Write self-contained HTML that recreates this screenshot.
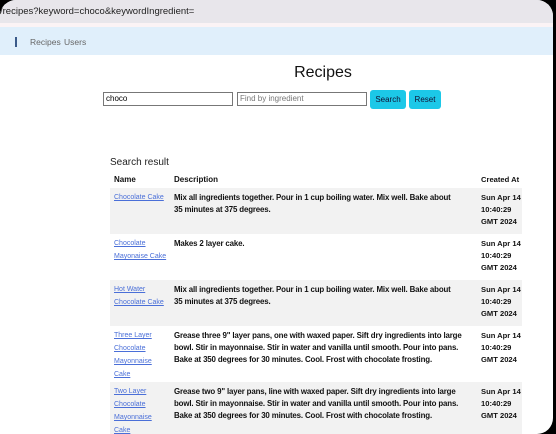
<!DOCTYPE html>
<html><head><meta charset="utf-8"><style>
*{margin:0;padding:0;box-sizing:border-box}
body{width:556px;height:434px;background:#000;font-family:"Liberation Sans",sans-serif;overflow:hidden;position:relative}
.win{position:absolute;left:0;top:0;width:553px;height:434px;background:#fff;border-radius:16px 16px 16px 0;overflow:hidden}
.addr{position:absolute;left:0;top:0;width:100%;height:23px;background:#e8e6eb;font-size:9.5px;color:#222;padding:6px 0 0 0;}
.strip{position:absolute;top:23px;left:0;width:100%;height:4px;background:#fbf3f5}
.nav{position:absolute;top:27px;left:0;width:100%;height:28px;background:#e0effb;font-size:8.5px;color:#666}
.nav .bar{position:absolute;left:15px;top:10px;width:2px;height:10px;background:#3a5a8a}
.nav span{position:absolute;top:10px}
h1{position:absolute;left:0;width:646px;text-align:center;top:64px;font-size:16px;font-weight:normal;color:#111}
.in{position:absolute;top:92px;height:14px;border:1px solid #777;font-size:8px;padding:1px 2px;background:#fff}
.btn{position:absolute;top:90px;height:19px;background:#1cc8e8;border-radius:3px;font-size:8px;color:#113;text-align:center;line-height:19px}
.sr{position:absolute;left:110px;top:157px;font-size:10px;color:#222}
table{position:absolute;left:110px;top:171px;width:412px;border-collapse:collapse;font-size:8px;table-layout:fixed}
th{text-align:left;font-weight:bold;height:17px;padding:0 4px;vertical-align:middle;color:#111;white-space:nowrap}
td{vertical-align:top;padding:3px 1px 1px 4px;line-height:12px;font-weight:bold;color:#111;overflow:hidden}
td.d{letter-spacing:-0.15px;font-size:7.9px;padding:4px 4px 1px}
td.t{padding:4px 0 1px 3px;white-space:nowrap;font-size:7.6px}
td a{color:#4a6fd8;font-weight:normal;font-size:7px;text-decoration:underline;white-space:nowrap}
tr.g td{background:#f2f2f2}
</style></head><body>
<div class="win">
<div class="addr">/recipes?keyword=choco&amp;keywordIngredient=</div>
<div class="strip"></div>
<div class="nav"><div class="bar"></div><span style="left:30px">Recipes</span><span style="left:64px">Users</span></div>
<h1>Recipes</h1>
<div class="in" style="left:103px;width:130px">choco</div>
<div class="in" style="left:237px;width:130px;color:#777">Find by ingredient</div>
<div class="btn" style="left:370px;width:36px">Search</div>
<div class="btn" style="left:409px;width:32px">Reset</div>
<div class="sr">Search result</div>
<table>
<colgroup><col style="width:60px"><col style="width:308px"><col style="width:44px"></colgroup>
<tr><th>Name</th><th>Description</th><th style="padding:0 0 0 3px;font-size:7.6px">Created At</th></tr>
<tr class="g" style="height:46px"><td><a>Chocolate Cake</a></td><td class="d">Mix all ingredients together. Pour in 1 cup boiling water. Mix well. Bake about<br>35 minutes at 375 degrees.</td><td class="t">Sun Apr 14<br>10:40:29<br>GMT 2024</td></tr>
<tr style="height:46px"><td><a>Chocolate<br>Mayonaise Cake</a></td><td class="d">Makes 2 layer cake.</td><td class="t">Sun Apr 14<br>10:40:29<br>GMT 2024</td></tr>
<tr class="g" style="height:46px"><td><a>Hot Water<br>Chocolate Cake</a></td><td class="d">Mix all ingredients together. Pour in 1 cup boiling water. Mix well. Bake about<br>35 minutes at 375 degrees.</td><td class="t">Sun Apr 14<br>10:40:29<br>GMT 2024</td></tr>
<tr style="height:53px"><td><a>Three Layer<br>Chocolate<br>Mayonnaise<br>Cake</a></td><td class="d">Grease three 9" layer pans, one with waxed paper. Sift dry ingredients into large<br>bowl. Stir in mayonnaise. Stir in water and vanilla until smooth. Pour into pans.<br>Bake at 350 degrees for 30 minutes. Cool. Frost with chocolate frosting.</td><td class="t">Sun Apr 14<br>10:40:29<br>GMT 2024</td></tr>
<tr class="g" style="height:56px"><td><a>Two Layer<br>Chocolate<br>Mayonnaise<br>Cake</a></td><td class="d">Grease two 9" layer pans, line with waxed paper. Sift dry ingredients into large<br>bowl. Stir in mayonnaise. Stir in water and vanilla until smooth. Pour into pans.<br>Bake at 350 degrees for 30 minutes. Cool. Frost with chocolate frosting.</td><td class="t">Sun Apr 14<br>10:40:29<br>GMT 2024</td></tr>
</table>
</div>
</body></html>
